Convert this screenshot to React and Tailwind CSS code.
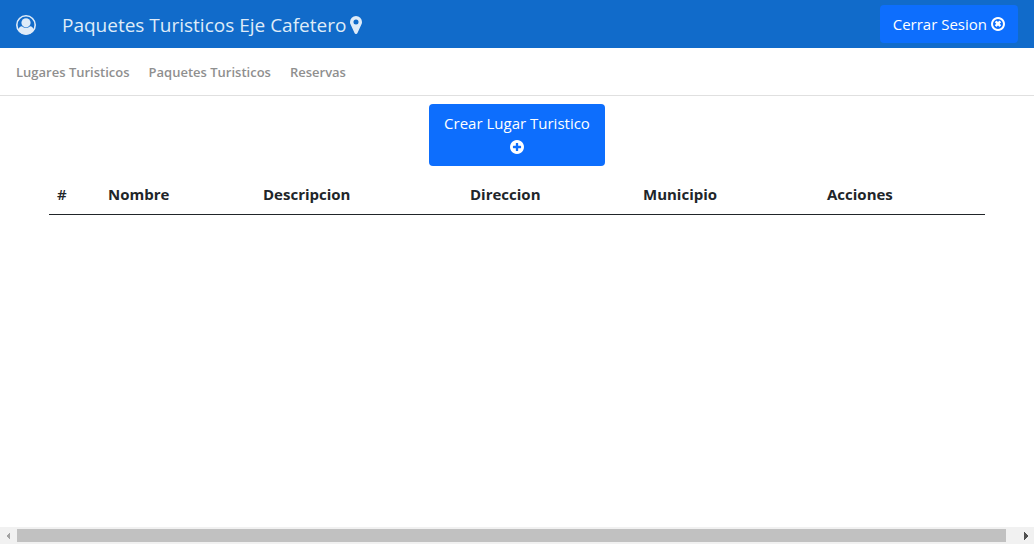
const CIRCLE =
  "q0 209-103 385.5t-279.5 279.5-385.5 103-385.5-103-279.5-279.5-103-385.5 103-385.5 279.5-279.5 385.5-103 385.5 103 279.5 279.5 103 385.5z";

function UserIcon() {
  return (
    <svg viewBox="0 0 20 20" className="size-5" fill="currentColor" aria-hidden="true">
      <circle cx="10" cy="10" r="9.2" fill="none" stroke="currentColor" strokeWidth="1.6" />
      <circle cx="10" cy="7.8" r="4.6" />
      <path d="M2.200 15.200C2.800 12.800 4 11.300 6 11.300c1.100 1.100 2.500 1.700 4 1.700s2.900-.6 4-1.700c2 0 3.200 1.500 3.800 3.900A9.300 9.300 0 0 1 10 19.400a9.300 9.300 0 0 1-7.800-4.200z" />
    </svg>
  );
}

function MarkerIcon() {
  return (
    <svg viewBox="0 0 1024 1536" className="h-[18px] w-3" fill="currentColor" aria-hidden="true">
      <path
        d="M728 512a216 216 0 1 0-432 0a216 216 0 1 0 432 0zM1024 512q0 109-33 179l-364 774q-16 33-47.5 52t-67.5 19-67.5-19-46.5-52l-365-774q-33-70-33-179 0-212 150-362t362-150 362 150 150 362z"
        fillRule="evenodd"
      />
    </svg>
  );
}

function CloseCircleIcon() {
  return (
    <svg viewBox="0 128 1536 1536" className="size-3.5" fill="currentColor" aria-hidden="true">
      <path
        d={
          "M1097 1050l-146 146q-10 10-23 10t-23-10l-137-137-137 137q-10 10-23 10t-23-10l-146-146q-10-10-10-23t10-23l137-137-137-137q-10-10-10-23t10-23l146-146q10-10 23-10t23 10l137 137 137-137q10-10 23-10t23 10l146 146q10 10 10 23t-10 23l-137 137 137 137q10 10 10 23t-10 23zm215-154q0-148-73-273t-198-198-273-73-273 73-198 198-73 273 73 273 198 198 273 73 273-73 198-198 73-273z" +
          "M1536 896" + CIRCLE
        }
        fillRule="evenodd"
      />
    </svg>
  );
}

function PlusCircleIcon() {
  return (
    <svg viewBox="0 128 1536 1536" className="size-3.5" fill="currentColor" aria-hidden="true">
      <path
        d={
          "M1216 960v-128q0-26-19-45t-45-19h-256v-256q0-26-19-45t-45-19h-128q-26 0-45 19t-19 45v256h-256q-26 0-45 19t-19 45v128q0 26 19 45t45 19h256v256q0 26 19 45t45 19h128q26 0 45-19t19-45v-256h256q26 0 45-19t19-45z" +
          "M1536 896" + CIRCLE
        }
        fillRule="evenodd"
      />
    </svg>
  );
}

function ScrollBar() {
  return (
    <div className="flex h-[17px] items-center bg-[#f1f1f1]">
      <button type="button" aria-label="Desplazar a la izquierda" className="flex w-[17px] pl-1.5 text-[#a3a3a3]">
        <svg viewBox="0 0 4 8" className="h-2 w-1" fill="currentColor" shapeRendering="crispEdges">
          <path d="M4 0v8L0 4z" />
        </svg>
      </button>
      <div className="flex flex-1 pr-[11px]">
        <div className="h-[13px] flex-1 bg-[#c1c1c1]" />
      </div>
      <button type="button" aria-label="Desplazar a la derecha" className="flex w-[17px] justify-end pr-1.5 text-[#505050]">
        <svg viewBox="0 0 4 8" className="h-2 w-1" fill="currentColor" shapeRendering="crispEdges">
          <path d="M0 0v8L4 4z" />
        </svg>
      </button>
    </div>
  );
}

export default function App() {
  return (
    <div className="flex min-h-screen flex-col bg-white font-['Open_Sans','Noto_Sans',sans-serif] text-base text-[#212529]">
      <header className="flex h-12 items-center justify-between bg-[#116bca] px-4">
        <div className="flex items-center pt-0.5 text-[#dfebf8]">
          <a href="#perfil" aria-label="Perfil">
            <UserIcon />
          </a>
          <h1 className="ml-[26px] flex items-center gap-1 text-[19px] leading-7">
            Paquetes Turisticos Eje Cafetero
            <MarkerIcon />
          </h1>
        </div>
        <button type="button" className="flex h-[38px] items-center gap-1 rounded bg-[#0d6efd] px-[13px] text-[15px] text-white">
          Cerrar Sesion
          <CloseCircleIcon />
        </button>
      </header>

      <nav className="flex h-12 items-center gap-[19px] border-b border-[#e0e0e0] px-4 pt-0.5 text-[13px] font-semibold text-[#8f8f8f]">
        <a href="#lugares">Lugares Turisticos</a>
        <a href="#paquetes">Paquetes Turisticos</a>
        <a href="#reservas">Reservas</a>
      </nav>

      <main className="flex flex-1 flex-col items-center px-[49px] pt-2">
        <button type="button" className="flex w-44 flex-col items-center rounded bg-[#0d6efd] py-[7px] text-[15px] leading-6 text-white">
          Crear Lugar Turistico
          <span className="flex h-6 items-center">
            <PlusCircleIcon />
          </span>
        </button>
        <table className="mt-2 w-full table-fixed border-collapse text-left text-[15px] leading-6">
          <thead>
            <tr className="border-b border-[#212529]">
              <th className="w-[51px] p-2 font-semibold">#</th>
              <th className="w-[155px] p-2 font-bold">Nombre</th>
              <th className="w-[207px] p-2 font-bold">Descripcion</th>
              <th className="w-[173px] p-2 font-bold">Direccion</th>
              <th className="w-[184px] p-2 font-bold">Municipio</th>
              <th className="p-2 font-bold">Acciones</th>
            </tr>
          </thead>
          <tbody />
        </table>
      </main>

      <ScrollBar />
    </div>
  );
}
